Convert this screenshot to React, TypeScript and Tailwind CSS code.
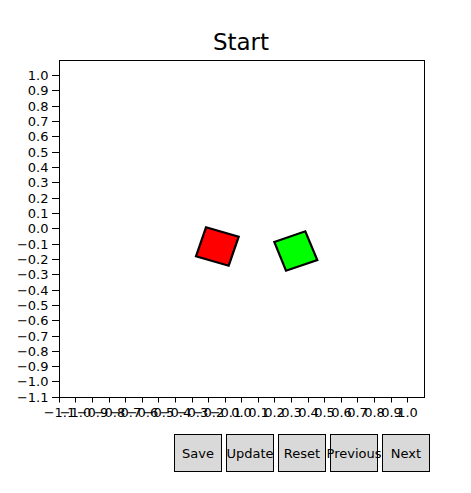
import React from "react";

const L = 59.3;
const R = 424.3;
const T = 60.3;
const B = 397.3;

const px = (v: number) => L + ((v + 1.1) / 2.2) * (R - L);
const py = (v: number) => B - ((v + 1.1) / 2.2) * (B - T);

const ticks = Array.from({ length: 22 }, (_, i) => Math.round((-1.1 + i * 0.1) * 10) / 10);
const fmt = (v: number) =>
  Math.abs(v) < 1e-9 ? "0.0" : (v < 0 ? "\u2212" : "") + Math.abs(v).toFixed(1);

export default function App() {
  const buttons = ["Save", "Update", "Reset", "Previous", "Next"];
  return (
    <div className="w-[471px] h-[493px] bg-white overflow-hidden font-['DejaVu_Sans','Liberation_Sans',sans-serif]">
      <svg width={471} height={420} className="block font-['DejaVu_Sans','Liberation_Sans',sans-serif]">
        <text x={241} y={50} fontSize={23} textAnchor="middle" fill="#000">
          Start
        </text>
        <polygon
          points="206,227.3 238.7,236.7 228.7,265.7 196,256.3"
          fill="#ff0000"
          stroke="#000"
          strokeWidth={2.2}
          strokeLinejoin="miter"
        />
        <polygon
          points="274.3,242 305.3,231.3 317.3,260 286,270.7"
          fill="#00ff00"
          stroke="#000"
          strokeWidth={2.2}
          strokeLinejoin="miter"
        />
        <rect x={59.5} y={60.5} width={365} height={337} fill="none" stroke="#000" strokeWidth={1} />
        {ticks.map((v) => {
          const y = Math.floor(py(v)) + 0.5;
          return (
            <g key={"y" + v}>
              <line x1={52} x2={59.5} y1={y} y2={y} stroke="#000" strokeWidth={1} />
              <text x={48.5} y={y + 4.7} fontSize={13} textAnchor="end" fill="#000">
                {fmt(v)}
              </text>
            </g>
          );
        })}
        {ticks.map((v) => {
          const x = Math.floor(px(v)) + 0.5;
          return (
            <g key={"x" + v}>
              <line x1={x} x2={x} y1={397.5} y2={402.5} stroke="#000" strokeWidth={1} />
              <text x={x} y={417} fontSize={13} textAnchor="middle" fill="#000">
                {fmt(v)}
              </text>
            </g>
          );
        })}
      </svg>
      <div className="flex gap-[4px] pl-[174px] pt-[14px]">
        {buttons.map((b) => (
          <div
            key={b}
            className="relative w-[48px] h-[38px] border border-black bg-[#d9d9d9] flex items-center justify-center"
          >
            <span className="relative z-10 whitespace-nowrap text-[13px] leading-none text-black">{b}</span>
          </div>
        ))}
      </div>
    </div>
  );
}
